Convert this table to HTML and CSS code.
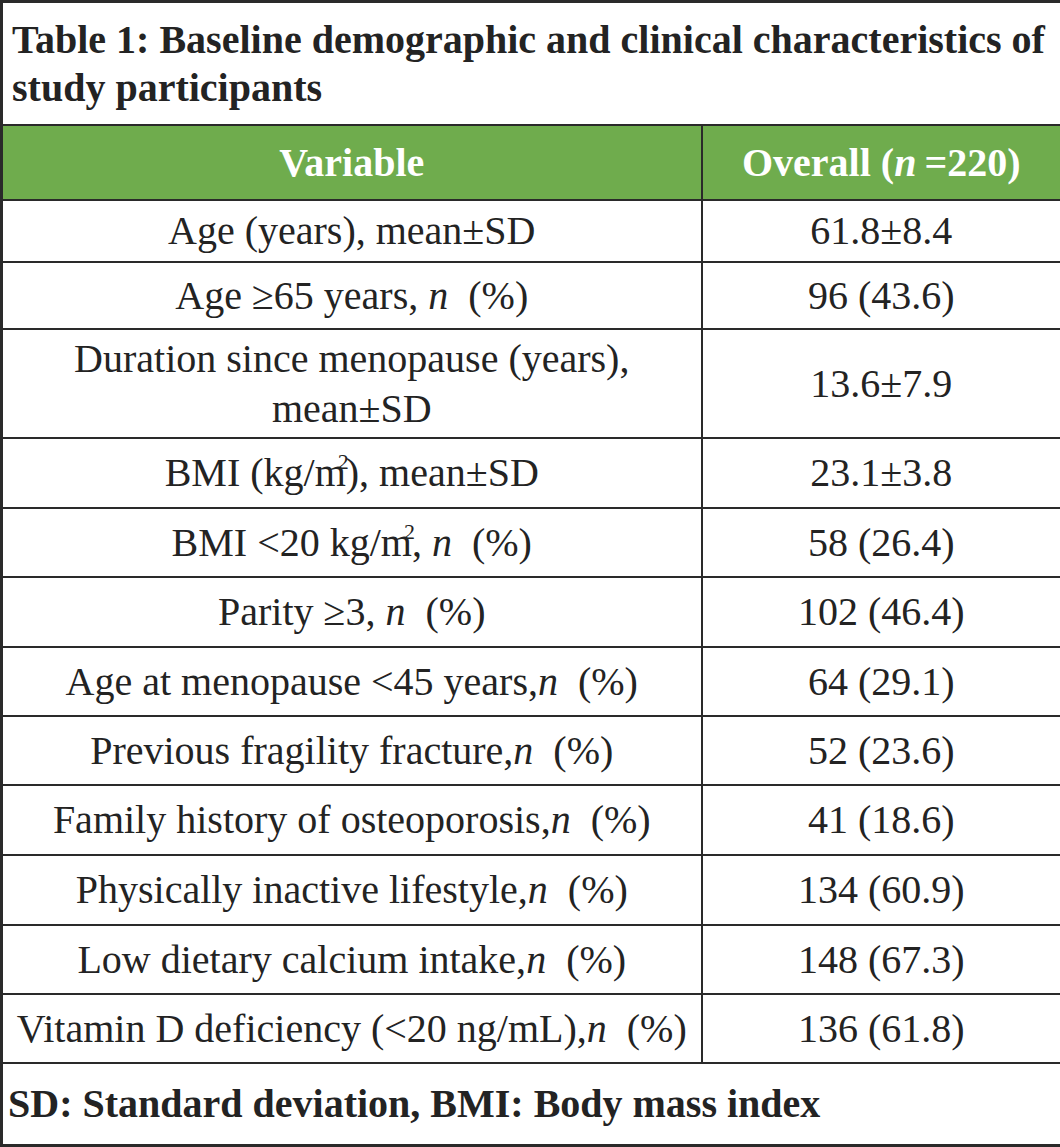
FILE: index.html
```html
<!DOCTYPE html>
<html lang="en">
<head>
<meta charset="utf-8">
<title>Table 1</title>
<link rel="stylesheet" href="styles.css">
</head>
<body>
<table class="tbl">
  <colgroup>
    <col class="col-var">
    <col class="col-all">
  </colgroup>
  <tbody>
    <tr class="r-title">
      <td class="title" colspan="2">Table 1: Baseline demographic and clinical characteristics of study participants</td>
    </tr>
    <tr class="r-head">
      <th>Variable</th>
      <th>Overall (<i>n</i>&thinsp;=220)</th>
    </tr>
    <tr class="r-a">
      <td>Age (years), mean±SD</td>
      <td>61.8±8.4</td>
    </tr>
    <tr class="r-b">
      <td>Age ≥65 years, <i>n</i> &nbsp;(%)</td>
      <td>96 (43.6)</td>
    </tr>
    <tr class="r-tall">
      <td>Duration since menopause (years),<br>mean±SD</td>
      <td>13.6±7.9</td>
    </tr>
    <tr class="r-70">
      <td>BMI (kg/m<sup class="sq">2</sup>), mean±SD</td>
      <td>23.1±3.8</td>
    </tr>
    <tr class="r-69">
      <td>BMI &lt;20 kg/m<sup class="sq">2</sup>, <i>n</i> &nbsp;(%)</td>
      <td>58 (26.4)</td>
    </tr>
    <tr class="r-70">
      <td>Parity ≥3, <i>n</i> &nbsp;(%)</td>
      <td>102 (46.4)</td>
    </tr>
    <tr class="r-69">
      <td>Age at menopause &lt;45 years,<i>n</i> &nbsp;(%)</td>
      <td>64 (29.1)</td>
    </tr>
    <tr class="r-69">
      <td>Previous fragility fracture,<i>n</i> &nbsp;(%)</td>
      <td>52 (23.6)</td>
    </tr>
    <tr class="r-70">
      <td>Family history of osteoporosis,<i>n</i> &nbsp;(%)</td>
      <td>41 (18.6)</td>
    </tr>
    <tr class="r-70">
      <td>Physically inactive lifestyle,<i>n</i> &nbsp;(%)</td>
      <td>134 (60.9)</td>
    </tr>
    <tr class="r-69">
      <td>Low dietary calcium intake,<i>n</i> &nbsp;(%)</td>
      <td>148 (67.3)</td>
    </tr>
    <tr class="r-69">
      <td>Vitamin D deficiency (&lt;20 ng/mL),<i>n</i> &nbsp;(%)</td>
      <td>136 (61.8)</td>
    </tr>
    <tr class="r-foot">
      <td class="foot" colspan="2">SD: Standard deviation, BMI: Body mass index</td>
    </tr>
  </tbody>
</table>
</body>
</html>
```

FILE: styles.css
```css
html, body {
  margin: 0;
  padding: 0;
  background: #ffffff;
}

.tbl {
  width: 1060px;
  border-collapse: collapse;
  table-layout: fixed;
  font-family: "Liberation Serif", "Times New Roman", serif;
  color: #232323;
  border: 3px solid #2a2a2a;
}

.col-var { width: 700px; }
.col-all { width: 360px; }

.tbl td,
.tbl th {
  border: 2px solid #2a2a2a;
  text-align: center;
  vertical-align: middle;
  padding: 0 2px;
  font-size: 40px;
  line-height: 46px;
  font-weight: normal;
  white-space: nowrap;
}

.r-title td.title {
  height: 121px;
  text-align: left;
  font-weight: bold;
  line-height: 48px;
  padding: 0 8px 0 9px;
  white-space: normal;
}

.r-head th {
  height: 73px;
  background: #6fac4d;
  color: #ffffff;
  font-weight: bold;
}

.r-a td { height: 60px; }
.r-b td { height: 65px; }
.r-tall td { height: 107px; line-height: 50px; }
.r-70 td { height: 68px; }
.r-69 td { height: 67px; }

.r-foot td.foot {
  height: 80px;
  text-align: left;
  font-weight: bold;
  padding: 0 5px;
}

.sq {
  font-size: 22px;
  line-height: 0;
  vertical-align: 0;
  position: relative;
  top: -17px;
  margin-left: -8px;
  margin-right: -3px;
}
```
